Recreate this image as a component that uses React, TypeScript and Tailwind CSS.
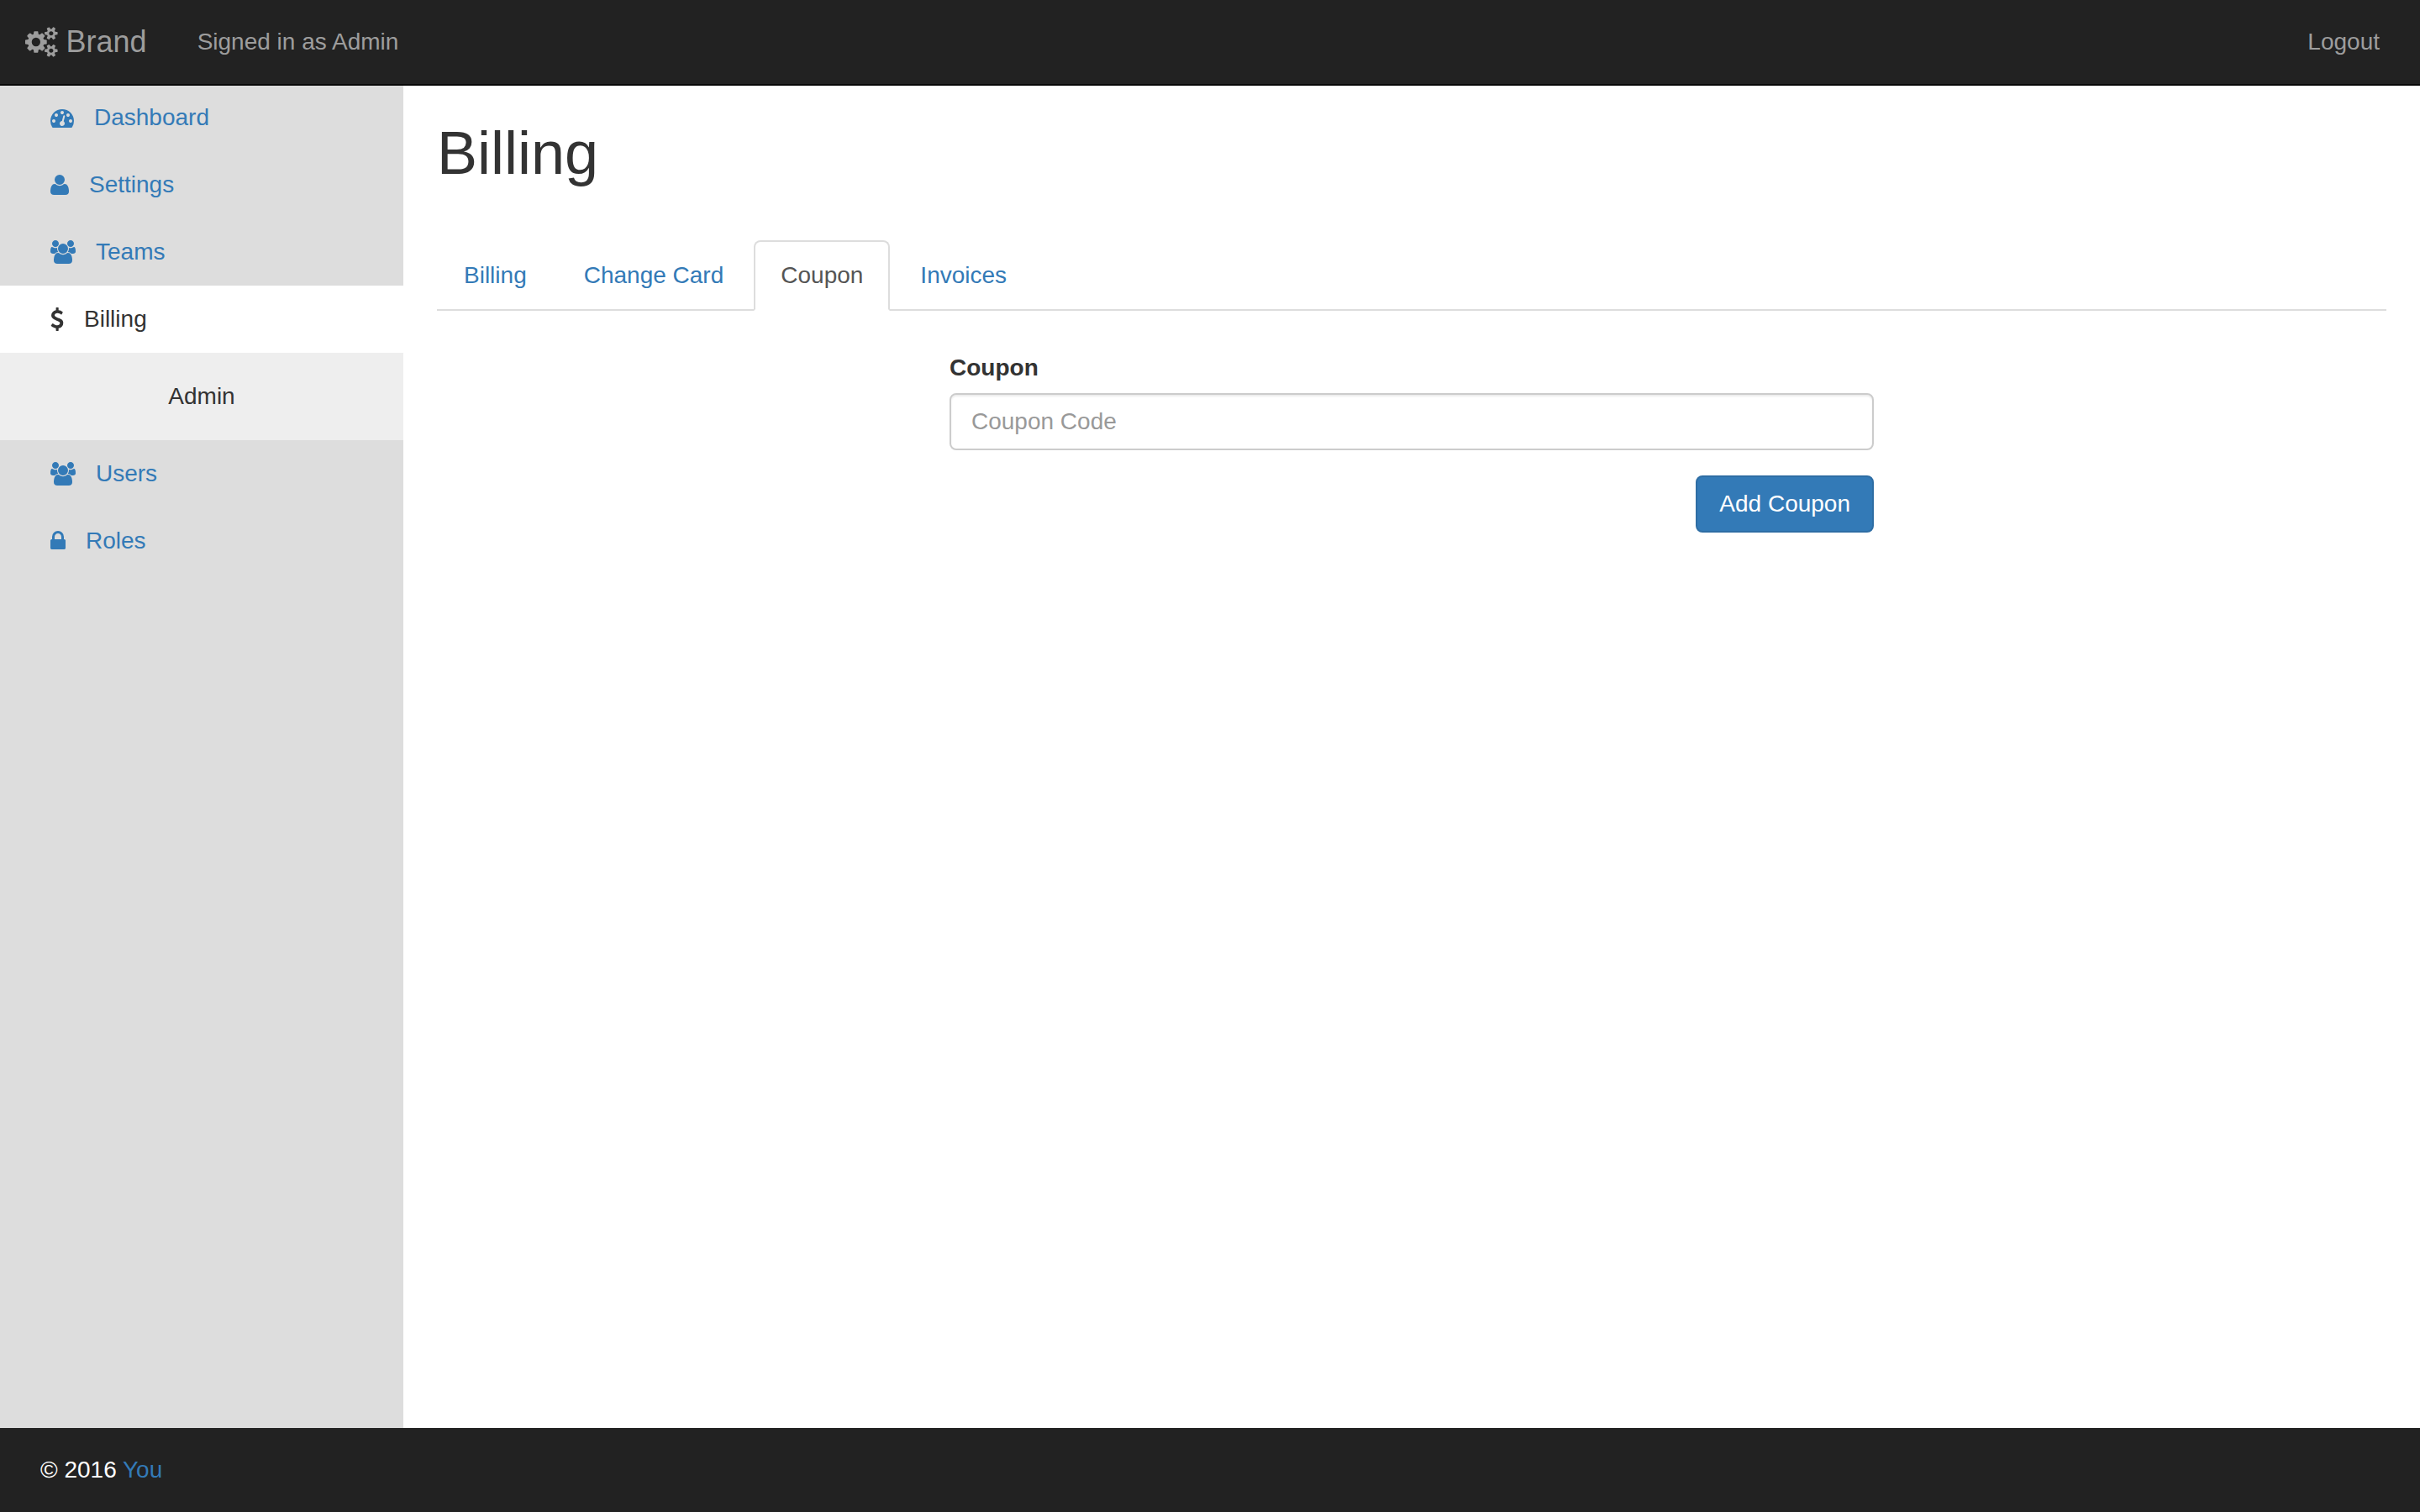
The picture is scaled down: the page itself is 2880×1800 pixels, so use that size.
import React, { useState } from "react";

type Glyph = { viewBox: string; path: string; size: string };

const glyphs: Record<string, Glyph> = {
  cogs: {
    viewBox: "0 0 1920 1792",
    size: "h-9",
    path: "M896 896q0-106-75-181t-181-75-181 75-75 181 75 181 181 75 181-75 75-181zm768 512q0-52-38-90t-90-38-90 38-38 90q0 53 37.5 90.5t90.5 37.5 90.5-37.5 37.5-90.5zm0-1024q0-52-38-90t-90-38-90 38-38 90q0 53 37.5 90.5t90.5 37.5 90.5-37.5 37.5-90.5zm-384 421v185q0 10-7 19.5t-16 10.5l-155 24q-11 35-32 76 34 48 90 115 7 11 7 20 0 12-7 19-23 30-82.5 89.5t-78.5 59.5q-11 0-21-7l-115-90q-37 19-77 31-11 108-23 155-7 24-30 24h-186q-11 0-20-7.5t-10-17.5l-23-153q-34-10-75-31l-118 89q-7 7-20 7-11 0-21-8-144-133-144-160 0-9 7-19 10-14 41-53t47-61q-23-44-35-82l-152-24q-10-1-17-9.5t-7-19.5v-185q0-10 7-19.5t16-10.5l155-24q11-35 32-76-34-48-90-115-7-11-7-20 0-12 7-20 22-30 82-89t79-59q11 0 21 7l115 90q34-18 77-32 11-108 23-154 7-24 30-24h186q11 0 20 7.5t10 17.5l23 153q34 10 75 31l118-89q8-7 20-7 11 0 21 8 144 133 144 160 0 8-7 19-12 16-42 54t-45 60q23 48 34 82l152 23q10 2 17 10.5t7 19.5zm640 533v140q0 16-149 31-12 27-30 52 51 113 51 138 0 4-4 7-122 71-124 71-8 0-46-47t-52-68q-20 2-30 2t-30-2q-14 21-52 68t-46 47q-2 0-124-71-4-3-4-7 0-25 51-138-18-25-30-52-149-15-149-31v-140q0-16 149-31 13-29 30-52-51-113-51-138 0-4 4-7 4-2 35-20t59-34 30-16q8 0 46 46.5t52 67.5q20-2 30-2t30 2q51-71 92-112l6-2q4 0 124 70 4 3 4 7 0 25-51 138 17 23 30 52 149 15 149 31zm0-1024v140q0 16-149 31-12 27-30 52 51 113 51 138 0 4-4 7-122 71-124 71-8 0-46-47t-52-68q-20 2-30 2t-30-2q-14 21-52 68t-46 47q-2 0-124-71-4-3-4-7 0-25 51-138-18-25-30-52-149-15-149-31v-140q0-16 149-31 13-29 30-52-51-113-51-138 0-4 4-7 4-2 35-20t59-34 30-16q8 0 46 46.5t52 67.5q20-2 30-2t30 2q51-71 92-112l6-2q4 0 124 70 4 3 4 7 0 25-51 138 17 23 30 52 149 15 149 31z",
  },
  dashboard: {
    viewBox: "0 0 1792 1792",
    size: "h-7",
    path: "M384 1152q0-53-37.5-90.5t-90.5-37.5-90.5 37.5-37.5 90.5 37.5 90.5 90.5 37.5 90.5-37.5 37.5-90.5zm192-448q0-53-37.5-90.5t-90.5-37.5-90.5 37.5-37.5 90.5 37.5 90.5 90.5 37.5 90.5-37.5 37.5-90.5zm428 481l101-382q6-26-7.5-48.5t-38.5-29.5-48 6.5-30 39.5l-101 382q-60 5-107 43.5t-63 98.5q-20 77 20 146t117 89 146-20 89-117q16-60-6-117t-72-91zm660-33q0-53-37.5-90.5t-90.5-37.5-90.5 37.5-37.5 90.5 37.5 90.5 90.5 37.5 90.5-37.5 37.5-90.5zm-640-640q0-53-37.5-90.5t-90.5-37.5-90.5 37.5-37.5 90.5 37.5 90.5 90.5 37.5 90.5-37.5 37.5-90.5zm448 192q0-53-37.5-90.5t-90.5-37.5-90.5 37.5-37.5 90.5 37.5 90.5 90.5 37.5 90.5-37.5 37.5-90.5zm320 448q0 261-141 483-19 29-54 29h-1402q-35 0-54-29-141-221-141-483 0-182 71-348t191-286 286-191 348-71 348 71 286 191 191 286 71 348z",
  },
  user: {
    viewBox: "192 0 1408 1792",
    size: "h-7",
    path: "M1600 1405q0 120-73 189.5t-194 69.5h-874q-121 0-194-69.5t-73-189.5q0-53 3.5-103.5t14-109 26.5-108.5 43-97.5 62-81 85.5-53.5 111.5-20q9 0 42 21.5t74.5 48 108 48 133.5 21.5 133.5-21.5 108-48 74.5-48 42-21.5q61 0 111.5 20t85.5 53.5 62 81 43 97.5 26.5 108.5 14 109 3.5 103.5zm-320-893q0 159-112.5 271.5t-271.5 112.5-271.5-112.5-112.5-271.5 112.5-271.5 271.5-112.5 271.5 112.5 112.5 271.5z",
  },
  users: {
    viewBox: "0 0 1920 1792",
    size: "h-7",
    path: "M593 896q-162 5-265 128h-134q-82 0-138-40.5t-56-118.5q0-353 124-353 6 0 43.5 21t97.5 42.5 119 21.5q67 0 133-23-5 37-5 66 0 139 81 256zm1071 637q0 120-73 189.5t-194 69.5h-874q-121 0-194-69.5t-73-189.5q0-53 3.5-103.5t14-109 26.5-108.5 43-97.5 62-81 85.5-53.5 111.5-20q10 0 43 21.5t73 48 107 48 135 21.5 135-21.5 107-48 73-48 43-21.5q61 0 111.5 20t85.5 53.5 62 81 43 97.5 26.5 108.5 14 109 3.5 103.5zm-1024-1277q0 106-75 181t-181 75-181-75-75-181 75-181 181-75 181 75 75 181zm704 384q0 159-112.5 271.5t-271.5 112.5-271.5-112.5-112.5-271.5 112.5-271.5 271.5-112.5 271.5 112.5 112.5 271.5zm576 225q0 78-56 118.5t-138 40.5h-134q-103-123-265-128 81-117 81-256 0-29-5-66 66 23 133 23 59 0 119-21.5t97.5-42.5 43.5-21q124 0 124 353zm-128-609q0 106-75 181t-181 75-181-75-75-181 75-181 181-75 181 75 75 181z",
  },
  dollar: {
    viewBox: "384 0 1024 1792",
    size: "h-7",
    path: "M1362 1185q0 153-99.5 263.5t-258.5 136.5v175q0 14-9 23t-23 9h-135q-13 0-22.5-9.5t-9.5-22.5v-175q-66-9-127.5-31t-101.5-44.5-74-48-46.5-37.5-17.5-18q-17-21-2-41l103-135q7-10 23-12 15-2 24 9l2 2q113 99 243 125 37 8 74 8 81 0 142.5-43t61.5-122q0-28-15-53t-33.5-42-58.5-37.5-66-32-80-32.5q-39-16-61.5-25t-61.5-26.5-62.5-31-56.5-35.5-53.5-42.5-43.5-49-35.5-58-21-66.5-8.5-78q0-138 98-242t255-134v-180q0-13 9.5-22.5t22.5-9.5h135q14 0 23 9t9 23v176q57 6 110.5 23t87 33.5 63.5 37.5 39 29 15 14q17 18 5 38l-81 146q-8 15-23 16-14 3-27-7-3-3-14.5-12t-39-26.5-58.5-32-74.5-26-85.5-11.5q-95 0-155 43t-60 111q0 26 8.5 48t29.5 41.5 39.5 33 56 31 60.5 27 70 27.5q53 20 81 31.5t76 35 75.5 42.5 62 50 53 63.5 31.5 76.5 13 94z",
  },
  lock: {
    viewBox: "320 0 1152 1792",
    size: "h-7",
    path: "M640 768h512v-192q0-106-75-181t-181-75-181 75-75 181v192zm832 96v576q0 40-28 68t-68 28h-960q-40 0-68-28t-28-68v-576q0-40 28-68t68-28h32v-192q0-184 132-316t316-132 316 132 132 316v192h32q40 0 68 28t28 68z",
  },
};

function Icon({ name }: { name: string }) {
  const glyph = glyphs[name];
  return (
    <svg viewBox={glyph.viewBox} className={`${glyph.size} w-auto shrink-0 fill-current`} aria-hidden="true">
      <path d={glyph.path} />
    </svg>
  );
}

function SideLink({ icon, label, active = false }: { icon: string; label: string; active?: boolean }) {
  return (
    <li>
      <a
        href="#"
        className={`flex items-center gap-6 px-[60px] py-5 ${active ? "bg-white text-[#333]" : "text-[#337ab7]"}`}
      >
        <Icon name={icon} />
        {label}
      </a>
    </li>
  );
}

function Sidebar() {
  return (
    <nav aria-label="Sections" className="-mt-0.5 w-1/6 shrink-0 bg-[#ddd]">
      <ul>
        <SideLink icon="dashboard" label="Dashboard" />
        <SideLink icon="user" label="Settings" />
        <SideLink icon="users" label="Teams" />
        <SideLink icon="dollar" label="Billing" active />
        <li className="bg-[#eee] py-8 text-center">Admin</li>
        <SideLink icon="users" label="Users" />
        <SideLink icon="lock" label="Roles" />
      </ul>
    </nav>
  );
}

const tabs = ["Billing", "Change Card", "Coupon", "Invoices"];

function Tabs({ current }: { current: string }) {
  return (
    <ul className="flex gap-1 border-b-2 border-[#ddd]">
      {tabs.map((tab) => (
        <li key={tab} className="-mb-0.5">
          <a
            href="#"
            aria-current={tab === current ? "page" : undefined}
            className={`block rounded-t-lg border-2 px-[30px] py-5 ${
              tab === current ? "border-[#ddd] border-b-white bg-white text-[#555]" : "border-transparent text-[#337ab7]"
            }`}
          >
            {tab}
          </a>
        </li>
      ))}
    </ul>
  );
}

function CouponForm() {
  const [code, setCode] = useState("");
  return (
    <form className="mx-auto mt-12 w-1/2 px-[30px]" onSubmit={(e) => e.preventDefault()}>
      <label htmlFor="coupon" className="mb-2.5 block font-bold">
        Coupon
      </label>
      <input
        id="coupon"
        type="text"
        placeholder="Coupon Code"
        value={code}
        onChange={(e) => setCode(e.target.value)}
        className="block h-[68px] w-full rounded-lg border-2 border-[#ccc] bg-white px-6 text-[#555] shadow-[inset_0_2px_2px_rgba(0,0,0,0.075)] placeholder:text-[#999]"
      />
      <div className="mt-[30px] flex justify-end">
        <button
          type="submit"
          className="h-[68px] rounded-lg border-2 border-[#2e6da4] bg-[#337ab7] px-[26px] text-white"
        >
          Add Coupon
        </button>
      </div>
    </form>
  );
}

export default function App() {
  return (
    <div className="flex min-h-screen flex-col bg-white font-['Liberation_Sans',Arial,sans-serif] text-[28px] leading-10 text-[#333]">
      <header className="relative z-10 flex items-center border-b-2 border-[#080808] bg-[#222] py-[30px] text-[#9d9d9d]">
        <a href="#" className="flex items-center gap-2.5 px-[30px] text-4xl leading-10">
          <Icon name="cogs" />
          Brand
        </a>
        <p className="px-[30px]">Signed in as Admin</p>
        <a href="#" className="ml-auto px-12">
          Logout
        </a>
      </header>
      <div className="flex flex-1">
        <Sidebar />
        <main className="min-w-0 flex-1 px-10 pt-10">
          <h1 className="mb-16 text-7xl leading-[80px] font-medium">Billing</h1>
          <Tabs current="Coupon" />
          <CouponForm />
        </main>
      </div>
      <footer className="bg-[#222] px-12 py-[30px] text-white">
        © 2016{" "}
        <a href="#" className="text-[#337ab7]">
          You
        </a>
      </footer>
    </div>
  );
}
